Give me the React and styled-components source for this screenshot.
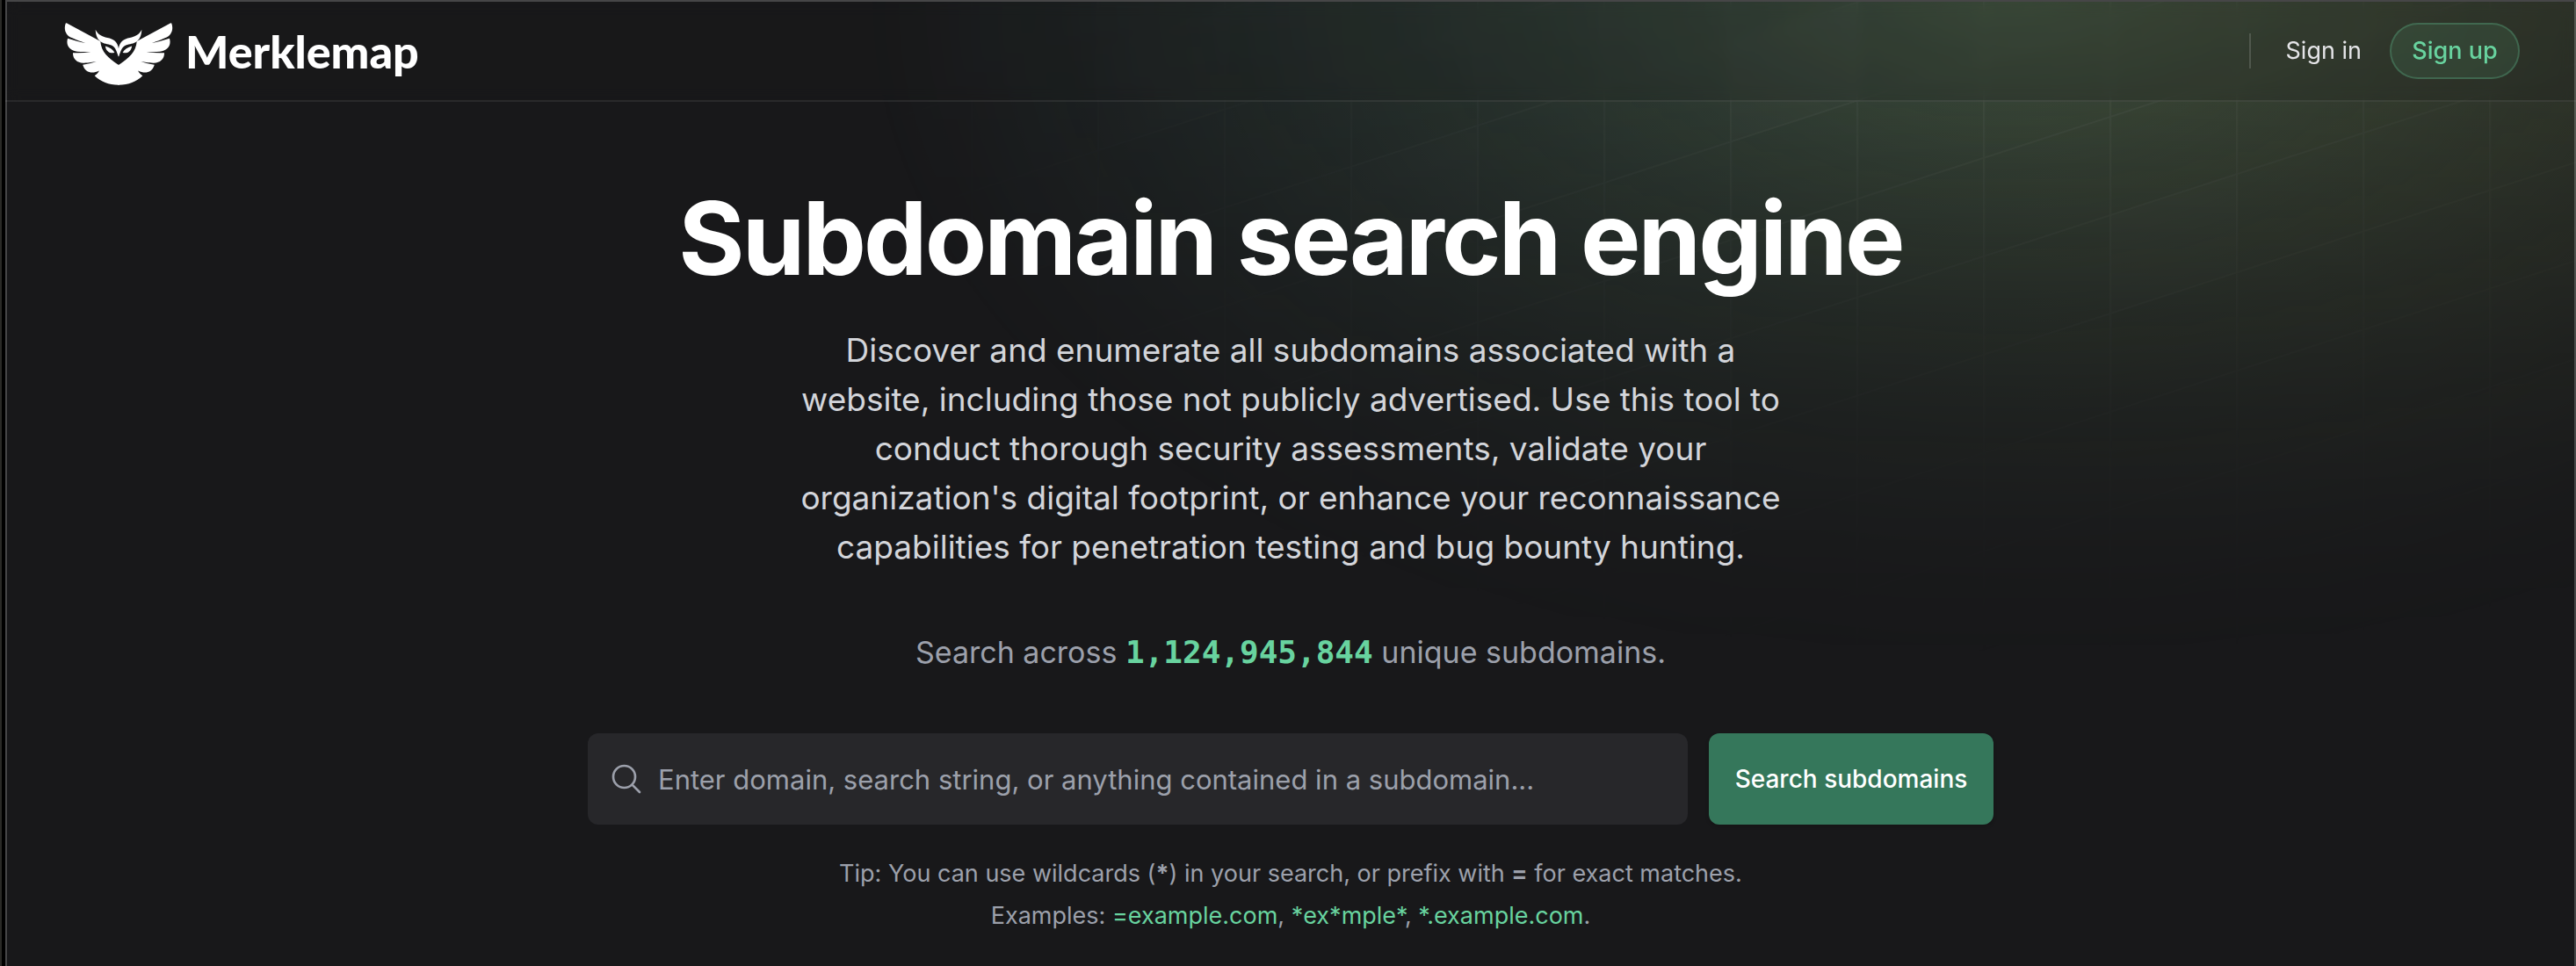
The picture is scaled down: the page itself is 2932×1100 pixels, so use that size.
import React from 'react'
import styled, { createGlobalStyle } from 'styled-components'

const GRID_SQUARES = [[4, 3], [2, 1], [7, 3], [10, 6]]
const EXAMPLES = ['=example.com', '*ex*mple*', '*.example.com']

function OwlLogo() {
    const half = (
        <>
            <path d="M225 78 L342 141 C345 178 368 198 405 223 L407 222 V292 H405 C370 292 344 281 322 260 C329 256 334 251 338 243 C328 248 322 249 314 249 C300 249 286 240 281 222 C298 220 312 216 328 211 C314 213 305 216 285 216 C262 217 246 202 247 181 C268 182 288 181 309 179 C292 178 280 179 262 177 C238 173 221 156 229 131 C250 138 270 143 290 147 C273 141 258 137 245 130 C222 122 214 100 222 79 Z" />
            <path d="M325 101 C334 119 348 125 366 129 C388 133 402 144 405 166 L406 164 V192 L405 194 C398 180 396 162 380 155 C366 149 354 151 341 141 C329 131 326 116 325 101 Z" />
            <path d="M359 158 C374 162 384 168 391 180 C382 184 362 182 359 158 Z" />
        </>
    )
    return (
        <svg viewBox="218 56 374 237" width="124" height="78" fill="#fff" aria-hidden="true">
            {half}
            <g transform="matrix(-1 0 0 1 810 0)">{half}</g>
        </svg>
    )
}

function SearchIcon() {
    return (
        <svg viewBox="0 0 24 24" width="40" height="40" fill="none" stroke="#9ca0ab" strokeWidth="1.6" aria-hidden="true">
            <path strokeLinecap="round" d="m21 21-5.197-5.197m0 0A7.5 7.5 0 1 0 5.196 5.196a7.5 7.5 0 0 0 10.607 10.607Z" />
        </svg>
    )
}

function Backdrop() {
    return (
        <BackdropStyled aria-hidden="true">
            <Glow>
                <GridPattern>
                    <defs>
                        <pattern id="grid" width="144" height="112" patternUnits="userSpaceOnUse" x="-24" y="8">
                            <path d="M1 112V1H144" fill="none" strokeWidth="2" />
                        </pattern>
                    </defs>
                    <rect width="100%" height="100%" strokeWidth="0" fill="url(#grid)" />
                    {GRID_SQUARES.map(([x, y]) => (
                        <rect key={`${x}-${y}`} width="146" height="114" x={x * 144 - 24} y={y * 112 + 8} strokeWidth="0" />
                    ))}
                </GridPattern>
            </Glow>
        </BackdropStyled>
    )
}

function App() {
    return (
        <Frame>
            <GlobalStyle />
            <Page>
                <Backdrop />
                <Header>
                    <Brand href="#">
                        <OwlLogo />
                        Merklemap
                    </Brand>
                    <Nav>
                        <Divider />
                        <SignIn href="#">Sign in</SignIn>
                        <SignUp href="#">Sign up</SignUp>
                    </Nav>
                </Header>
                <Hero>
                    <h1>Subdomain search engine</h1>
                    <p className="lead">
                        Discover and enumerate all subdomains associated with a website, including those not
                        publicly advertised. Use this tool to conduct thorough security assessments, validate
                        your organization's digital footprint, or enhance your reconnaissance capabilities for
                        penetration testing and bug bounty hunting.
                    </p>
                    <p className="stats">
                        Search across <span>1,124,945,844</span> unique subdomains.
                    </p>
                    <SearchForm onSubmit={(e) => e.preventDefault()}>
                        <SearchField>
                            <SearchIcon />
                            <input
                                type="text"
                                aria-label="Search subdomains"
                                placeholder="Enter domain, search string, or anything contained in a subdomain..."
                            />
                        </SearchField>
                        <SearchButton type="submit">Search subdomains</SearchButton>
                    </SearchForm>
                    <Tips>
                        <p>
                            Tip: You can use wildcards (<strong>*</strong>) in your search, or prefix
                            with <strong>=</strong> for exact matches.
                        </p>
                        <p>
                            Examples:{' '}
                            {EXAMPLES.map((example, i) => (
                                <React.Fragment key={example}>
                                    <a href="#">{example}</a>
                                    {i < EXAMPLES.length - 1 ? ', ' : '.'}
                                </React.Fragment>
                            ))}
                        </p>
                    </Tips>
                </Hero>
            </Page>
        </Frame>
    )
}

const GlobalStyle = createGlobalStyle`
    *{
        box-sizing: border-box;
        margin: 0;
        padding: 0;
    }
    body{
        background: #000;
        color: #fff;
        font-family: Inter, "Liberation Sans", sans-serif;
    }
    a{
        color: inherit;
        text-decoration: none;
    }
`;

const Frame = styled.div`
    min-height: 100vh;
    display: flex;
    padding-left: 4px;
    border-left: 2px solid #2a2a27;
`;

const Page = styled.div`
    position: relative;
    flex: 1;
    min-width: 0;
    overflow: hidden;
    padding-top: 2px;
    background: #18181a;
    &::after{
        content: '';
        position: absolute;
        inset: 0;
        border: 2px solid rgba(255, 255, 255, 0.2);
        border-bottom: none;
        pointer-events: none;
    }
`;

const BackdropStyled = styled.div`
    position: absolute;
    top: 2px;
    left: 50%;
    width: 2600px;
    height: 800px;
    margin-left: -484px;
    -webkit-mask-image: linear-gradient(white, transparent);
    mask-image: linear-gradient(white, transparent);
`;

const Glow = styled.div`
    position: absolute;
    inset: 0;
    overflow: hidden;
    background: linear-gradient(to right, rgba(92, 178, 160, 0.3), rgba(224, 253, 134, 0.3));
    -webkit-mask-image: radial-gradient(farthest-side at top, white, transparent);
    mask-image: radial-gradient(farthest-side at top, white, transparent);
`;

const GridPattern = styled.svg`
    position: absolute;
    left: 0;
    top: -50%;
    width: 100%;
    height: 200%;
    transform: skewY(-18deg);
    fill: rgba(255, 255, 255, 0.015);
    stroke: rgba(255, 255, 255, 0.05);
    mix-blend-mode: overlay;
`;

const Header = styled.header`
    position: relative;
    display: flex;
    align-items: center;
    justify-content: space-between;
    height: 114px;
    padding: 0 64px;
    border-bottom: 2px solid rgba(255, 255, 255, 0.08);
    background: rgba(24, 24, 27, 0.2);
    backdrop-filter: blur(8px);
`;

const Brand = styled.a`
    display: flex;
    align-items: center;
    gap: 14px;
    padding-left: 3px;
    font-family: Lato, sans-serif;
    font-size: 52px;
    line-height: 60px;
    font-weight: 900;
`;

const Nav = styled.nav`
    display: flex;
    align-items: center;
    font-size: 27px;
    line-height: 48px;
`;

const Divider = styled.span`
    width: 2px;
    height: 40px;
    margin-right: 40px;
    background: rgba(255, 255, 255, 0.15);
`;

const SignIn = styled.a`
    margin-right: 32px;
    color: #e4e4e7;
`;

const SignUp = styled.a`
    min-width: 148px;
    padding: 8px 0;
    border-radius: 32px;
    text-align: center;
    color: #68d39f;
    font-weight: 500;
    background: rgba(104, 211, 159, 0.1);
    box-shadow: inset 0 0 0 2px rgba(104, 211, 159, 0.25);
`;

const Hero = styled.main`
    position: relative;
    display: flex;
    flex-direction: column;
    align-items: center;
    padding: 96px 32px 32px;
    text-align: center;
    h1{
        font-size: 115px;
        line-height: 120px;
        font-weight: 700;
        letter-spacing: -0.025em;
    }
    .lead{
        max-width: 1152px;
        margin-top: 39px;
        font-size: 37px;
        line-height: 56px;
        color: #d3d5da;
    }
    .stats{
        margin-top: 64px;
        font-size: 34px;
        line-height: 56px;
        color: #9ca0ab;
        span{
            font-family: "DejaVu Sans Mono", monospace;
            font-size: 36px;
            line-height: 36px;
            font-weight: 700;
            color: #68d39f;
        }
    }
`;

const SearchForm = styled.form`
    display: flex;
    gap: 24px;
    width: 100%;
    max-width: 1600px;
    margin-top: 64px;
`;

const SearchField = styled.label`
    flex: 1;
    display: flex;
    align-items: center;
    gap: 16px;
    height: 104px;
    padding: 0 24px;
    border-radius: 12px;
    background: #27272a;
    input{
        flex: 1;
        border: none;
        outline: none;
        background: transparent;
        color: #fff;
        font-family: inherit;
        font-size: 31px;
        &::placeholder{
            color: #9ca0ab;
            opacity: 1;
        }
    }
`;

const SearchButton = styled.button`
    min-width: 324px;
    padding: 0 24px;
    border: none;
    border-radius: 12px;
    background: #35775b;
    color: #fff;
    font-family: inherit;
    font-size: 28px;
    font-weight: 500;
    box-shadow: 0 2px 4px rgba(0, 0, 0, 0.2);
    cursor: pointer;
`;

const Tips = styled.div`
    margin-top: 32px;
    font-size: 27px;
    line-height: 48px;
    color: #9ca0ab;
    a{
        color: #68d39f;
    }
`;

export default App
